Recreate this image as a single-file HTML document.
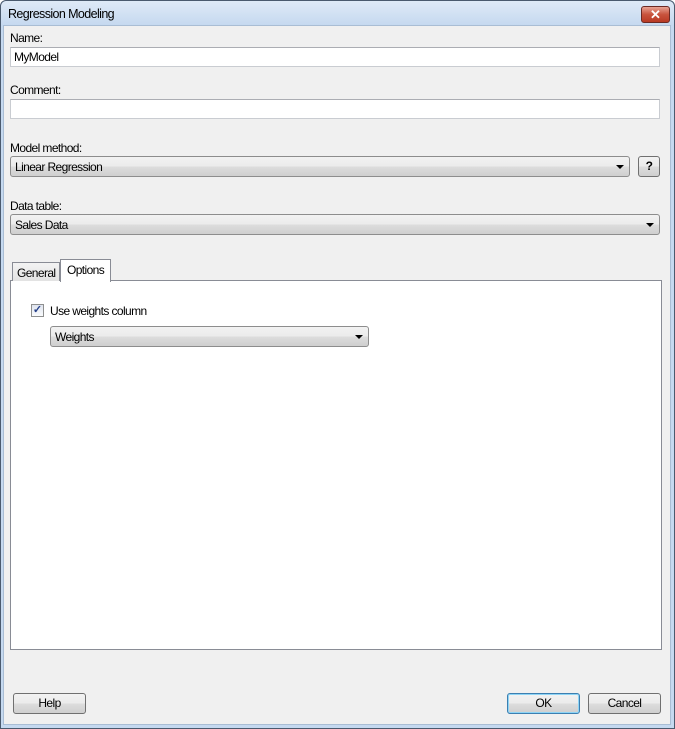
<!DOCTYPE html>
<html><head><style>
*{box-sizing:border-box;margin:0;padding:0}
body{width:675px;height:729px;overflow:hidden;font-family:"Liberation Sans",sans-serif;font-size:12px;letter-spacing:-0.6px;color:#000;background:#fff}
.win{position:absolute;left:0;top:0;width:675px;height:729px;background:#c5d9f0;border:1px solid #4a5a6e;border-radius:6px 6px 0 0}
.title{position:absolute;left:0;top:0;width:673px;height:25px;background:linear-gradient(#dfeaf7,#c4d8ef);border-radius:6px 6px 0 0}
.title span{position:absolute;left:7px;top:6px;font-size:12.5px;color:#000}
.close{position:absolute;left:640px;top:5px;width:29px;height:17px;border:1px solid #6b2a24;border-radius:3px;background:linear-gradient(#e8a393,#c8533d 50%,#b83a24);color:#fff;font-weight:bold;text-align:center;font-size:13px;line-height:15px;letter-spacing:0}
.a{position:absolute}
.lbl{position:absolute;font-size:12px}
.inp{position:absolute;background:#fff;border:1px solid #c9ccd1;border-top-color:#abadb3;padding:2px 3px;height:20px}
.cmb{position:absolute;border:1px solid #8d8d8d;border-radius:3px;background:linear-gradient(#f2f2f2,#ebebeb 50%,#dddddd 50%,#cfcfcf);padding:3px 4px;height:21px}
.cmb .ar{position:absolute;right:5px;top:8px;width:0;height:0;border-left:4px solid transparent;border-right:4px solid transparent;border-top:4px solid #000}
.btn{position:absolute;border:1px solid #707070;border-radius:3px;background:linear-gradient(#f2f2f2,#ebebeb 50%,#dddddd 50%,#cfcfcf);text-align:center;line-height:19px;height:21px}
</style></head><body>
<div class="win">
<div class="title"><span>Regression Modeling</span><div class="close">✕</div></div>
</div>
<div class="a" style="left:3px;top:25px;width:668px;height:700px;background:#f0f0f0;border:1px solid #a9bdd4"></div>

<div class="lbl" style="left:10px;top:31px">Name:</div>
<div class="inp" style="left:10px;top:47px;width:650px">MyModel</div>
<div class="lbl" style="left:10px;top:83px">Comment:</div>
<div class="inp" style="left:10px;top:99px;width:650px"></div>

<div class="lbl" style="left:10px;top:141px">Model method:</div>
<div class="cmb" style="left:10px;top:156px;width:620px">Linear Regression<div class="ar"></div></div>
<div class="btn" style="left:638px;top:156px;width:22px;font-weight:bold">?</div>

<div class="lbl" style="left:10px;top:199px">Data table:</div>
<div class="cmb" style="left:10px;top:214px;width:650px">Sales Data<div class="ar"></div></div>

<div class="a" style="left:10px;top:280px;width:652px;height:370px;background:#fff;border:1px solid #898c95"></div>
<div class="a" style="left:12px;top:262px;width:48px;height:19px;border:1px solid #898c95;border-bottom:none;background:linear-gradient(#f3f3f3,#e3e3e3);padding:3px 0 0 4px">General</div>
<div class="a" style="left:60px;top:259px;width:51px;height:23px;border:1px solid #898c95;border-bottom:none;background:#fff;padding:3px 0 0 6px">Options</div>

<div class="a" style="left:31px;top:304px;width:13px;height:13px;border:1px solid #8e8f8f;background:linear-gradient(#dfe4ee,#fafbfd);color:#27418a;font-size:11px;line-height:11px;text-align:center;font-weight:bold;letter-spacing:0">✓</div>
<div class="lbl" style="left:50px;top:304px">Use weights column</div>
<div class="cmb" style="left:50px;top:326px;width:319px">Weights<div class="ar"></div></div>

<div class="btn" style="left:13px;top:693px;width:73px">Help</div>
<div class="btn" style="left:507px;top:693px;width:73px;border-color:#3c7fb1;box-shadow:inset 0 0 0 1px #8ed4f5">OK</div>
<div class="btn" style="left:588px;top:693px;width:73px">Cancel</div>
</body></html>
